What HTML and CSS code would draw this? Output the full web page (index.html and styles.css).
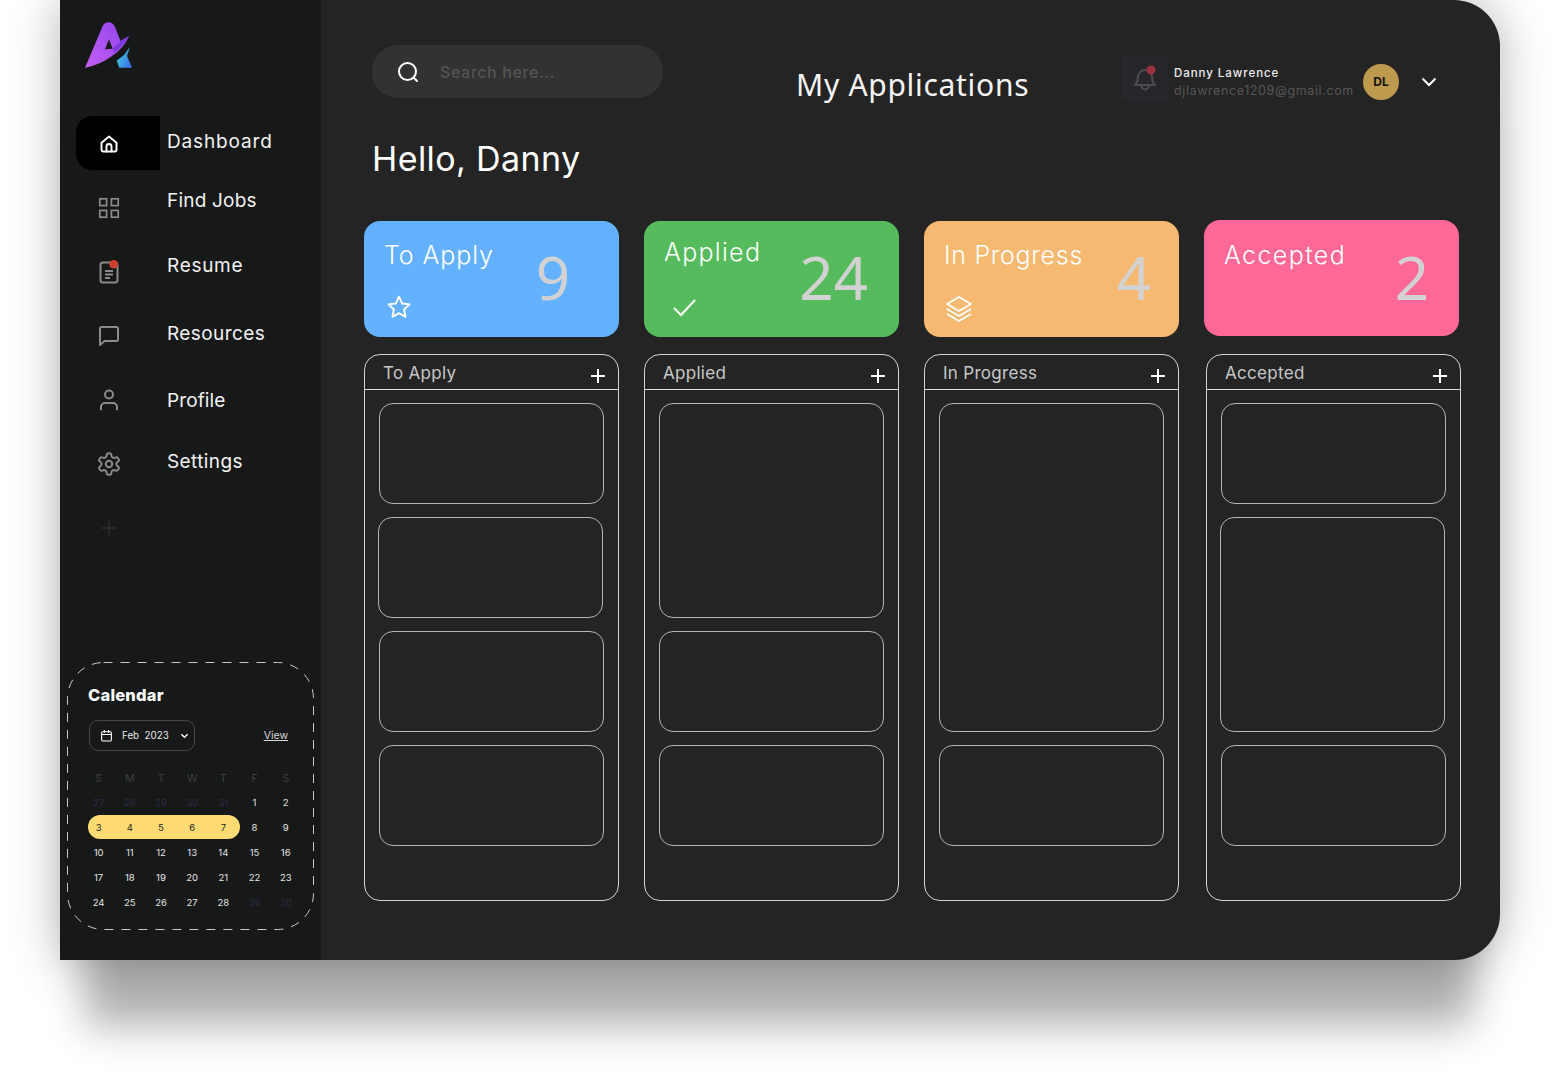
FILE: index.html
```html
<!DOCTYPE html>
<html lang="en">
<head>
    <meta charset="UTF-8">
    <meta name="viewport" content="width=device-width, initial-scale=1.0">
    <title>My Applications</title>
    <link rel="stylesheet" href="styles.css">
</head>
<body>
<div class="app">

    <!-- Sidebar -->
    <aside class="sidebar">
        <svg class="logo" width="47" height="46" viewBox="85 22 47 46">
            <defs>
                <linearGradient id="logoPurple" x1="0" y1="1" x2="1" y2="0">
                    <stop offset="0" stop-color="#c65ef5"/>
                    <stop offset="1" stop-color="#8f45ea"/>
                </linearGradient>
                <linearGradient id="logoTeal" x1="0" y1="0" x2="1" y2="0.6">
                    <stop offset="0" stop-color="#3fdcd8"/>
                    <stop offset="1" stop-color="#3c74ea"/>
                </linearGradient>
            </defs>
            <path fill="url(#logoPurple)" fill-rule="evenodd" d="M85 67.7 L102.5 26.5 Q104.5 22.3 108.5 22.3 Q113 22.3 115 27 L120.5 41 L129 36 Q124 48 112 56 Q100 65 85 67.7 Z M109 39.3 L105 49.3 L112.7 48.7 Z"/>
            <path fill="#7d3ce0" d="M112.7 48.7 L120.5 41 L129 36 Q124 46 114 53 Z"/>
            <path fill="url(#logoTeal)" d="M116.7 60.7 L124 55 L130 46.7 L127 56 L132 67.7 L119.3 67.7 Z"/>
        </svg>

        <nav class="nav">
            <a class="nav-item active" href="#">
                <span class="nav-icon">
                    <svg width="20" height="20" viewBox="0 0 24 24" fill="none" stroke="currentColor" stroke-width="2.3" stroke-linejoin="round" stroke-linecap="round"><path d="M3 10.5 12 3l9 7.5V19a2 2 0 0 1-2 2H5a2 2 0 0 1-2-2z"/><path d="M9 21v-6a3 3 0 0 1 6 0v6"/></svg>
                </span>
                <span class="nav-label">Dashboard</span>
            </a>
            <a class="nav-item" href="#">
                <span class="nav-icon">
                    <svg width="22" height="22" viewBox="0 0 22 22" fill="none" stroke="currentColor" stroke-width="1.7"><rect x="1.800" y="1.800" width="6.800" height="6.800"/><rect x="13.400" y="1.800" width="6.800" height="6.800"/><rect x="1.800" y="13.400" width="6.800" height="6.800"/><rect x="13.400" y="13.400" width="6.800" height="6.800"/></svg>
                </span>
                <span class="nav-label">Find Jobs</span>
            </a>
            <a class="nav-item" href="#">
                <span class="nav-icon">
                    <svg width="22" height="24" viewBox="0 0 22 24" fill="none" stroke="currentColor" stroke-width="2"><rect x="2.500" y="2.500" width="17" height="20" rx="2.500"/><path d="M7 11h8M7 14.500h8M7 18h5"/><circle cx="15.700" cy="4.300" r="4.300" fill="#cf3f2e" stroke="none"/></svg>
                </span>
                <span class="nav-label">Resume</span>
            </a>
            <a class="nav-item" href="#">
                <span class="nav-icon">
                    <svg width="22" height="22" viewBox="0 0 22 22" fill="none" stroke="currentColor" stroke-width="2" stroke-linejoin="round"><path d="M2 3.500A1.500 1.500 0 0 1 3.500 2h15A1.500 1.500 0 0 1 20 3.500v11a1.500 1.500 0 0 1-1.500 1.500H6.500L2 20z"/></svg>
                </span>
                <span class="nav-label">Resources</span>
            </a>
            <a class="nav-item" href="#">
                <span class="nav-icon">
                    <svg width="22" height="22" viewBox="0 0 22 22" fill="none" stroke="currentColor" stroke-width="2" stroke-linecap="round"><circle cx="11" cy="5.500" r="4"/><path d="M3 20.500v-2.500a4 4 0 0 1 4-4h8a4 4 0 0 1 4 4v2.500"/></svg>
                </span>
                <span class="nav-label">Profile</span>
            </a>
            <a class="nav-item" href="#">
                <span class="nav-icon">
                    <svg width="26" height="26" viewBox="0 0 24 24" fill="none" stroke="currentColor" stroke-width="1.8" stroke-linejoin="round"><path d="M12.22 2h-.44a2 2 0 0 0-2 2v.18a2 2 0 0 1-1 1.73l-.43.25a2 2 0 0 1-2 0l-.15-.08a2 2 0 0 0-2.73.73l-.22.38a2 2 0 0 0 .73 2.73l.15.1a2 2 0 0 1 1 1.72v.51a2 2 0 0 1-1 1.74l-.15.09a2 2 0 0 0-.73 2.73l.22.38a2 2 0 0 0 2.73.73l.15-.08a2 2 0 0 1 2 0l.43.25a2 2 0 0 1 1 1.73V20a2 2 0 0 0 2 2h.44a2 2 0 0 0 2-2v-.18a2 2 0 0 1 1-1.73l.43-.25a2 2 0 0 1 2 0l.15.08a2 2 0 0 0 2.73-.73l.22-.39a2 2 0 0 0-.73-2.73l-.15-.08a2 2 0 0 1-1-1.74v-.5a2 2 0 0 1 1-1.74l.15-.09a2 2 0 0 0 .73-2.73l-.22-.38a2 2 0 0 0-2.73-.73l-.15.08a2 2 0 0 1-2 0l-.43-.25a2 2 0 0 1-1-1.73V4a2 2 0 0 0-2-2z"/><circle cx="12" cy="12" r="3"/></svg>
                </span>
                <span class="nav-label">Settings</span>
            </a>
            <a class="nav-item nav-add" href="#">
                <span class="nav-icon">
                    <svg width="18" height="18" viewBox="0 0 18 18" stroke="currentColor" stroke-width="1.6"><path d="M9 1.5v15M1.5 9h15"/></svg>
                </span>
            </a>
        </nav>

        <!-- Calendar widget -->
        <section class="calendar">
            <svg class="calendar-dash" width="247" height="268" viewBox="0 0 247 268" fill="none">
                <rect x="0.5" y="0.5" width="246" height="267" rx="36" stroke="#c8c8c8" stroke-width="1" stroke-dasharray="9 8"/>
            </svg>
            <h3 class="calendar-title">Calendar</h3>
            <div class="calendar-controls">
                <div class="month-picker">
                    <svg width="13" height="13" viewBox="0 0 24 24" fill="none" stroke="#fff" stroke-width="2"><rect x="3" y="5" width="18" height="17" rx="2"/><path d="M3 10h18M8 2v5M16 2v5"/></svg>
                    <span class="month-text">Feb&nbsp; 2023</span>
                    <svg width="9" height="9" viewBox="0 0 10 10" fill="none" stroke="#fff" stroke-width="1.5"><path d="M1.5 3.5 5 7l3.5-3.5"/></svg>
                </div>
                <a class="view-link" href="#">View</a>
            </div>
            <div class="month-grid">
                <span class="dow">S</span><span class="dow">M</span><span class="dow">T</span><span class="dow">W</span><span class="dow">T</span><span class="dow">F</span><span class="dow">S</span>
                <span class="off">27</span><span class="off">28</span><span class="off">29</span><span class="off">30</span><span class="off">31</span><span>1</span><span>2</span>
                <div class="range"><span>3</span><span>4</span><span>5</span><span>6</span><span>7</span></div><span>8</span><span>9</span>
                <span>10</span><span>11</span><span>12</span><span>13</span><span>14</span><span>15</span><span>16</span>
                <span>17</span><span>18</span><span>19</span><span>20</span><span>21</span><span>22</span><span>23</span>
                <span>24</span><span>25</span><span>26</span><span>27</span><span>28</span><span class="off">29</span><span class="off">30</span>
            </div>
        </section>
    </aside>

    <!-- Main content -->
    <main class="main">
        <header class="topbar">
            <div class="search">
                <svg width="24" height="24" viewBox="0 0 24 24" fill="none" stroke="#fff" stroke-width="2" stroke-linecap="round"><circle cx="11.5" cy="11.5" r="8.5"/><path d="M17.5 17.5 21 21"/></svg>
                <span class="search-text">Search here...</span>
            </div>
            <h1 class="page-title">My Applications</h1>
            <div class="user">
                <div class="bell">
                    <svg width="26" height="28" viewBox="0 0 26 28" fill="none" stroke="#4c4c50" stroke-width="2" stroke-linejoin="round"><path d="M3 21c2-2 3-3.500 3-8a7 7 0 0 1 14 0c0 4.500 1 6 3 8z"/><path d="M9.500 22a3.500 3.500 0 0 0 7 0"/><circle cx="19" cy="6" r="4.500" fill="#9c2f40" stroke="none"/></svg>
                </div>
                <div class="user-info">
                    <span class="user-name">Danny Lawrence</span>
                    <span class="user-mail">djlawrence1209@gmail.com</span>
                </div>
                <div class="avatar">DL</div>
                <svg class="user-caret" width="16" height="10" viewBox="0 0 16 10" fill="none" stroke="#fff" stroke-width="2"><path d="M1.500 1.500 8 8l6.500-6.500"/></svg>
            </div>
        </header>

        <h2 class="hello">Hello, Danny</h2>

        <!-- Summary cards -->
        <section class="stats">
            <div class="stat stat-blue">
                <div class="stat-left">
                    <span class="stat-label">To Apply</span>
                    <svg class="stat-icon" width="26" height="26" viewBox="0 0 24 24" fill="none" stroke="#fff" stroke-width="1.8" stroke-linejoin="round"><path d="M12 2.500l2.900 6.300 6.800.8-5 4.700 1.300 6.800-6-3.400-6 3.400 1.300-6.800-5-4.700 6.800-.8z"/></svg>
                </div>
                <span class="stat-count">9</span>
            </div>
            <div class="stat stat-green">
                <div class="stat-left">
                    <span class="stat-label">Applied</span>
                    <svg class="stat-icon" width="26" height="26" viewBox="0 0 26 26" fill="none" stroke="#fff" stroke-width="2"><path d="M3 14l7 7L24 6"/></svg>
                </div>
                <span class="stat-count">24</span>
            </div>
            <div class="stat stat-orange">
                <div class="stat-left">
                    <span class="stat-label">In Progress</span>
                    <svg class="stat-icon" width="28" height="28" viewBox="0 0 28 28" fill="none" stroke="#fff" stroke-width="1.800" stroke-linejoin="round"><path d="M14 2 26 9l-12 7L2 9z"/><path d="M2 14l12 7 12-7"/><path d="M2 19l12 7 12-7"/></svg>
                </div>
                <span class="stat-count">4</span>
            </div>
            <div class="stat stat-pink">
                <div class="stat-left">
                    <span class="stat-label">Accepted</span>
                </div>
                <span class="stat-count">2</span>
            </div>
        </section>

        <!-- Kanban columns -->
        <section class="boards">
            <div class="board">
                <div class="board-head"><span>To Apply</span><svg width="14" height="14" viewBox="0 0 14 14" stroke="#fff" stroke-width="2"><path d="M7 0v14M0 7h14"/></svg></div>
                <div class="board-body">
                    <div class="job"></div>
                    <div class="job job-nudge"></div>
                    <div class="job"></div>
                    <div class="job"></div>
                </div>
            </div>
            <div class="board">
                <div class="board-head"><span>Applied</span><svg width="14" height="14" viewBox="0 0 14 14" stroke="#fff" stroke-width="2"><path d="M7 0v14M0 7h14"/></svg></div>
                <div class="board-body">
                    <div class="job job-tall"></div>
                    <div class="job"></div>
                    <div class="job"></div>
                </div>
            </div>
            <div class="board">
                <div class="board-head"><span>In Progress</span><svg width="14" height="14" viewBox="0 0 14 14" stroke="#fff" stroke-width="2"><path d="M7 0v14M0 7h14"/></svg></div>
                <div class="board-body">
                    <div class="job job-huge"></div>
                    <div class="job"></div>
                </div>
            </div>
            <div class="board board-last">
                <div class="board-head"><span>Accepted</span><svg width="14" height="14" viewBox="0 0 14 14" stroke="#fff" stroke-width="2"><path d="M7 0v14M0 7h14"/></svg></div>
                <div class="board-body">
                    <div class="job"></div>
                    <div class="job job-tall job-nudge"></div>
                    <div class="job"></div>
                </div>
            </div>
        </section>
    </main>
</div>
</body>
</html>
```

FILE: styles.css
```css
/* Base */
* {
    box-sizing: border-box;
}

html, body {
    height: 1081px;
    margin: 0;
    padding: 0;
    overflow: hidden;
    background-color: #fff;
    font-family: Inter, 'Liberation Sans', sans-serif;
}

.app {
    display: flex;
    width: 1440px;
    height: 960px;
    margin-left: 60px;
    border-radius: 0 46px 46px 0;
    overflow: hidden;
    background-color: #242424;
    box-shadow: 0 0 50px rgba(0, 0, 0, 0.3), 0 92px 40px -25px rgba(0, 0, 0, 0.3);
}

/* Sidebar */
.sidebar {
    display: flex;
    flex-direction: column;
    flex: 0 0 261px;
    background-color: #171918;
}

.logo {
    display: block;
    margin: 22px 0 0 25px;
}

.nav {
    display: flex;
    flex-direction: column;
    margin-top: 44px;
}

.nav-item {
    display: flex;
    align-items: center;
    height: 64px;
    color: #fff;
    text-decoration: none;
}

.nav-icon {
    display: flex;
    flex: 0 0 auto;
    align-items: center;
    justify-content: center;
    width: 66px;
    margin-left: 16px;
    color: #8a8a8a;
}

.nav-label {
    margin-left: 25px;
    font-size: 19px;
    letter-spacing: 0.4px;
    color: #f2f2f2;
}

.active .nav-icon {
    width: 84px;
    height: 54px;
    margin-top: -2px;
    padding: 2px 18px 0 0;
    background-color: #000;
    border-radius: 16px 0 0 16px;
    color: #fff;
}

.active .nav-label {
    margin-left: 7px;
    margin-bottom: 6px;
    letter-spacing: 0.85px;
}

.nav-item:nth-child(2) .nav-label { margin-bottom: 16px; letter-spacing: 0.2px; }
.nav-item:nth-child(3) .nav-label { margin-bottom: 14px; letter-spacing: 0.7px; }
.nav-item:nth-child(4) .nav-label { margin-bottom: 6px; }
.nav-item:nth-child(5) .nav-label { letter-spacing: 0.1px; }
.nav-item:nth-child(6) .nav-label { margin-bottom: 6px; }

.nav-add .nav-icon {
    color: #2e2e2e;
}

/* Calendar */
.calendar {
    position: relative;
    width: 247px;
    height: 268px;
    margin: auto 0 30px 7px;
    padding: 24px 0 0 15px;
}

.calendar-dash {
    position: absolute;
    top: 0;
    left: 0;
}

.calendar-title {
    margin: 0 0 0 6px;
    font-size: 16.500px;
    line-height: 18px;
    font-weight: 800;
    letter-spacing: 0.2px;
    color: #fff;
}

.calendar-controls {
    display: flex;
    align-items: center;
    justify-content: space-between;
    width: 199px;
    margin: 16px 0 0 7px;
}

.month-picker {
    display: flex;
    align-items: center;
    width: 106px;
    height: 31px;
    padding: 0 5px 0 10px;
    border: 1px solid #474747;
    border-radius: 9px;
}

.month-text {
    flex: 1;
    margin-left: 9px;
    font-size: 9.800px;
    color: #e8e8e8;
}

.view-link {
    font-size: 10.500px;
    color: #d8d8d8;
    text-decoration: underline;
}

.month-grid {
    display: grid;
    grid-template-columns: repeat(7, 31.200px);
    grid-template-rows: 24px;
    grid-auto-rows: 25.200px;
    margin: 14.600px 0 0 1px;
    font-size: 9.500px;
    color: #e4e4e4;
}

.month-grid span {
    display: flex;
    align-items: center;
    justify-content: center;
}

.month-grid .dow {
    font-size: 11px;
    color: #3d3d3d;
}

.month-grid .off {
    color: #2c2a46;
}

.range {
    position: relative;
    display: grid;
    grid-template-columns: repeat(5, 31.200px);
    grid-column: 1 / span 5;
    color: #1c1c1c;
}

.range::before {
    content: "";
    position: absolute;
    top: 0;
    bottom: 1px;
    left: 4.500px;
    right: -1.500px;
    background-color: #ffdc73;
    border-radius: 12px;
}

.range span {
    position: relative;
}

/* Main area */
.main {
    flex: 1;
    display: flex;
    flex-direction: column;
    padding: 45px 39px 0 43px;
}

.topbar {
    display: flex;
    align-items: flex-start;
    margin-left: 8px;
}

.search {
    display: flex;
    align-items: center;
    flex: 0 0 291px;
    height: 53px;
    padding-left: 24px;
    background-color: #323232;
    border-radius: 26px;
}

.search-text {
    margin-left: 20px;
    font-size: 16px;
    font-weight: 500;
    letter-spacing: 0.6px;
    color: #545454;
}

.page-title {
    width: 232px;
    margin: 21px 0 0 133px;
    font-family: 'Noto Sans', sans-serif;
    font-size: 30px;
    line-height: 38px;
    font-weight: 400;
    letter-spacing: 0.7px;
    white-space: nowrap;
    color: #f4f4f4;
}

.user {
    display: flex;
    align-items: center;
    margin: 10px 0 0 94px;
}

.bell {
    display: flex;
    align-items: center;
    justify-content: center;
    width: 46px;
    height: 46px;
    background-color: #26262b;
}

.user-info {
    display: flex;
    flex-direction: column;
    width: 189px;
    margin: 7px 0 0 6px;
}

.user-name {
    font-size: 11.500px;
    line-height: 18px;
    font-weight: 500;
    letter-spacing: 0.95px;
    color: #eee;
}

.user-mail {
    font-size: 12.500px;
    line-height: 18px;
    letter-spacing: 0.6px;
    white-space: nowrap;
    color: #565656;
}

.avatar {
    display: flex;
    align-items: center;
    justify-content: center;
    width: 36px;
    height: 36px;
    margin-top: 7px;
    border-radius: 50%;
    background-color: #bd9a4e;
    font-size: 12px;
    font-weight: 700;
    color: #111;
}

.user-caret {
    margin: 7px 0 0 22px;
}

.hello {
    margin: 30px 0 0 8px;
    font-size: 34px;
    line-height: 50px;
    font-weight: 400;
    letter-spacing: 0.4px;
    color: #fff;
}

/* Summary cards */
.stats {
    display: grid;
    grid-template-columns: repeat(4, 255px);
    column-gap: 25px;
    margin-top: 37px;
}

.stat {
    display: flex;
    justify-content: space-between;
    height: 116px;
    padding-left: 20px;
    border-radius: 16px;
}

.stat-left {
    display: flex;
    flex-direction: column;
    align-items: flex-start;
}

.stat-label {
    margin-top: 18px;
    font-size: 25px;
    line-height: 32px;
    font-weight: 300;
    letter-spacing: 0.9px;
    color: #fff;
}

.stat-icon {
    margin-top: 23px;
    margin-left: 2px;
}

.stat-count {
    margin-top: 12px;
    font-family: 'Noto Sans', sans-serif;
    font-size: 60px;
    line-height: 88px;
    font-weight: 400;
    color: #d2d2d2;
}

.stat-blue { background-color: #64b2ff; }
.stat-blue .stat-count { padding-right: 49px; }

.stat-green { background-color: #55bb5d; }
.stat-green .stat-label { margin-top: 15px; letter-spacing: 1.300px; }
.stat-green .stat-count { padding-right: 31px; }
.stat-green .stat-icon { margin-top: 26px; margin-left: 7px; }

.stat-orange { background-color: #f5b971; }
.stat-orange .stat-label { letter-spacing: 0.7px; }
.stat-orange .stat-count { padding-right: 28px; }
.stat-orange .stat-icon { margin-top: 24px; margin-left: 1px; }

.stat-pink {
    margin-top: -1px;
    background-color: #ff6897;
}
.stat-pink .stat-label { margin-top: 19px; letter-spacing: 1.400px; }
.stat-pink .stat-count { margin-top: 13px; padding-right: 30px; }

/* Kanban boards */
.boards {
    display: grid;
    grid-template-columns: repeat(4, 255px);
    column-gap: 25px;
    margin-top: 17px;
}

.board {
    height: 547px;
    border: 1px solid #d4d4d4;
    border-radius: 16px;
}

.board-last {
    margin: 0 -2px 0 2px;
}

.board-head {
    display: flex;
    align-items: flex-start;
    justify-content: space-between;
    height: 35px;
    padding: 8px 13px 0 18px;
    border-bottom: 1px solid #dcdcdc;
    font-size: 17px;
    line-height: 21px;
    letter-spacing: 0.3px;
    color: #c8c8c8;
}

.board-head svg {
    margin-top: 6px;
}

.board-body {
    display: flex;
    flex-direction: column;
    align-items: flex-start;
    gap: 13px;
    padding: 13px 0 0 14px;
}

.job {
    width: 225px;
    height: 101px;
    border: 1px solid #b4b4b4;
    border-radius: 14px;
}

.job-tall {
    height: 215px;
}

.job-huge {
    height: 329px;
}

.job-nudge {
    margin-left: -1px;
}
```
